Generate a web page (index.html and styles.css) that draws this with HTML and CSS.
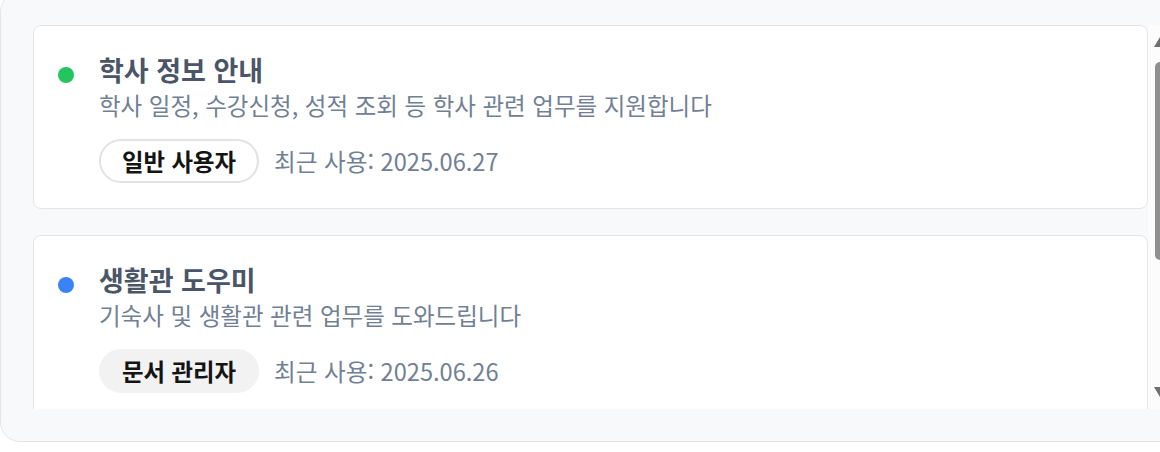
FILE: index.html
```html
<!DOCTYPE html>
<html lang="ko">
<head>
<meta charset="utf-8">
<link rel="stylesheet" href="styles.css">
</head>
<body>
<div class="panel">
  <div class="viewport">
    <div class="list">
      <div class="card">
        <span class="dot dot-green"></span>
        <div class="body">
          <div class="title">학사 정보 안내</div>
          <div class="desc">학사 일정, 수강신청, 성적 조회 등 학사 관련 업무를 지원합니다</div>
          <div class="meta">
            <span class="pill pill-outline">일반 사용자</span>
            <span class="date">최근 사용: 2025.06.27</span>
          </div>
        </div>
      </div>
      <div class="card">
        <span class="dot dot-blue"></span>
        <div class="body">
          <div class="title">생활관 도우미</div>
          <div class="desc">기숙사 및 생활관 관련 업무를 도와드립니다</div>
          <div class="meta">
            <span class="pill pill-filled">문서 관리자</span>
            <span class="date">최근 사용: 2025.06.26</span>
          </div>
        </div>
      </div>
    </div>
    <div class="scrollbar" aria-hidden="true">
      <div class="sb-btn">
        <svg width="12" height="10" viewBox="0 0 12 10"><path d="M6 0 L12 10 L0 10 Z" fill="#6f6f6f"/></svg>
      </div>
      <div class="sb-track"><div class="sb-thumb"></div></div>
      <div class="sb-btn">
        <svg width="12" height="10" viewBox="0 0 12 10"><path d="M0 0 L12 0 L6 10 Z" fill="#6f6f6f"/></svg>
      </div>
    </div>
  </div>
</div>
</body>
</html>
```
FILE: styles.css
```css
html, body {
  margin: 0;
  padding: 0;
  background: #ffffff;
  overflow: hidden;
}
body {
  font-family: "Noto Sans CJK KR", "Noto Sans", sans-serif;
}
.panel {
  box-sizing: border-box;
  width: 1205px;
  margin-top: -8px;
  padding: 32px;
  background: #f8f9fb;
  border: 1px solid #e3e5e8;
  border-radius: 20px;
}
.viewport {
  display: flex;
  height: 384px;
}
.list {
  flex: 1;
  min-width: 0;
  overflow-y: auto;
  scrollbar-width: none;
  display: flex;
  flex-direction: column;
  gap: 26px;
}
.card {
  flex: none;
  box-sizing: border-box;
  height: 184px;
  display: flex;
  align-items: flex-start;
  gap: 25px;
  padding: 25px 24px 25px 24px;
  background: #ffffff;
  border: 1px solid #e3e5e8;
  border-radius: 8px;
}
.dot {
  flex: none;
  width: 16px;
  height: 16px;
  border-radius: 50%;
  margin-top: 16px;
}
.dot-green { background: #22c55e; }
.dot-blue { background: #3b82f6; }
.body {
  display: flex;
  flex-direction: column;
}
.title {
  font-size: 27px;
  font-weight: 700;
  color: #4a5568;
  line-height: 38px;
}
.desc {
  font-size: 23.5px;
  color: #718096;
  line-height: 33px;
}
.meta {
  display: flex;
  align-items: center;
  gap: 15px;
  margin-top: 17px;
}
.pill {
  box-sizing: border-box;
  display: inline-flex;
  align-items: center;
  justify-content: center;
  width: 160px;
  height: 44px;
  border-radius: 22px;
  font-size: 23.4px;
  font-weight: 700;
  color: #141414;
}
.pill-outline {
  background: #ffffff;
  border: 2px solid #e2e2e2;
}
.pill-filled {
  background: #f2f2f2;
  border: 2px solid #f2f2f2;
}
.date {
  font-size: 23.6px;
  color: #718096;
}
.scrollbar {
  flex: none;
  width: 24px;
  display: flex;
  flex-direction: column;
  background: #fcfcfc;
}
.sb-btn {
  flex: none;
  height: 34px;
  display: flex;
  align-items: center;
  justify-content: center;
}
.sb-track {
  flex: 1;
  padding-top: 3px;
}
.sb-thumb {
  height: 198px;
  margin: 0 7px;
  border-radius: 6px;
  background: #8f8f8f;
}
```
